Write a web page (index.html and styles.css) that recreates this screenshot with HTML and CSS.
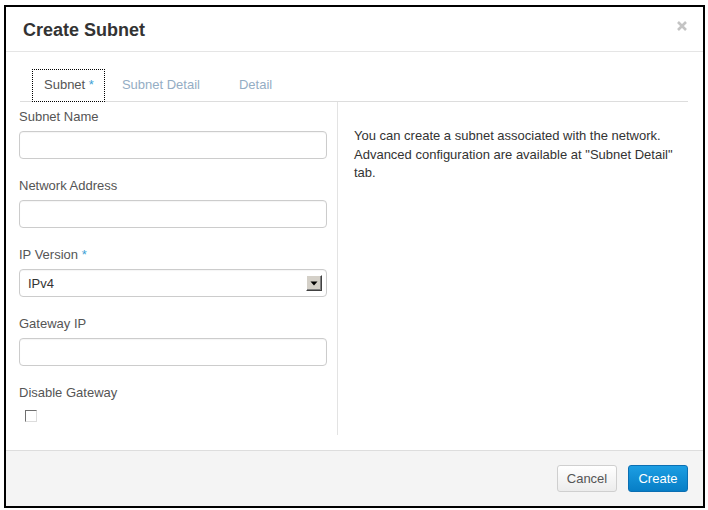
FILE: index.html
```html
<!DOCTYPE html>
<html>
<head>
<meta charset="utf-8">
<title>Create Subnet</title>
<link rel="stylesheet" href="styles.css">
</head>
<body>
<div class="modal">
  <div class="modal-header">
    <h3 class="title">Create Subnet</h3>
    <span class="close" aria-label="Close">
      <svg width="10" height="10" viewBox="0 0 10 10"><path d="M1 1 L9 9 M9 1 L1 9" stroke="#c4c4c4" stroke-width="2.6" stroke-linecap="butt"/></svg>
    </span>
  </div>
  <div class="modal-body">
    <ul class="tabs">
      <li class="tab tab-active">Subnet <span class="req">*</span></li>
      <li class="tab tab-second">Subnet Detail</li>
      <li class="tab tab-third">Detail</li>
    </ul>
    <div class="columns">
      <div class="col-left">
        <div class="field">
          <label class="label">Subnet Name</label>
          <div class="input"></div>
        </div>
        <div class="field">
          <label class="label">Network Address</label>
          <div class="input"></div>
        </div>
        <div class="field">
          <label class="label">IP Version <span class="req">*</span></label>
          <div class="input select">
            <span class="select-text">IPv4</span>
            <span class="select-btn">
              <svg width="8" height="5" viewBox="0 0 8 5"><path d="M0.5 0.5 H7.5 L4 4.5 Z" fill="#000"/></svg>
            </span>
          </div>
        </div>
        <div class="field">
          <label class="label">Gateway IP</label>
          <div class="input"></div>
        </div>
        <div class="field field-last">
          <label class="label">Disable Gateway</label>
          <span class="checkbox"></span>
        </div>
      </div>
      <div class="col-right">
        <p class="help">You can create a subnet associated with the network. Advanced configuration are available at "Subnet Detail" tab.</p>
      </div>
    </div>
  </div>
  <div class="modal-footer">
    <button class="btn btn-default">Cancel</button>
    <button class="btn btn-primary">Create</button>
  </div>
</div>
</body>
</html>
```

FILE: styles.css
```css
html, body {
  margin: 0;
  padding: 0;
  background: #fff;
}

body {
  font-family: "Liberation Sans", Arial, sans-serif;
  font-size: 13px;
  color: #333;
  padding: 5px 0 0 4px;
}

.modal {
  width: 701px;
  height: 503px;
  box-sizing: border-box;
  border: 2px solid #000;
  background: #fff;
  display: flex;
  flex-direction: column;
}

.modal-header {
  display: flex;
  align-items: center;
  justify-content: space-between;
  padding: 13px 16px 11px 17px;
  border-bottom: 1px solid #e5e5e5;
}

.title {
  margin: 0;
  font-size: 18px;
  line-height: 20px;
  font-weight: bold;
  color: #333;
}

.close {
  display: flex;
  width: 10px;
  height: 10px;
  margin-top: -8px;
}

.modal-body {
  flex: 1;
  padding: 17px 15px 0 13px;
}

.tabs {
  list-style: none;
  margin: 0 0 0 1px;
  padding: 0;
  display: flex;
  border-bottom: 1px solid #dddddd;
  height: 32px;
}

.tab {
  line-height: 32px;
  height: 32px;
  color: #94adc4;
  padding: 0 20px;
}

.tab-active {
  margin-left: 12px;
  padding: 0 11px 0 12px;
  color: #555;
  background: #fff;
  box-sizing: border-box;
  height: 33px;
  outline: 1px dotted #000;
  outline-offset: -1px;
}

.tab-second {
  padding-left: 17px;
}

.tab-third {
  padding-left: 19px;
}

.req {
  color: #3c9fd6;
}

.columns {
  display: flex;
}

.col-left {
  width: 308px;
  padding: 6px 10px 13px 0;
  border-right: 1px solid #e3e3e3;
}

.field {
  display: flex;
  flex-direction: column;
  margin-bottom: 18px;
}

.field-last {
  margin-bottom: 0;
}

.label {
  line-height: 18px;
  color: #555;
  margin-bottom: 5px;
}

.field-last .label {
  margin-bottom: 8px;
}

.input {
  height: 28px;
  box-sizing: border-box;
  border: 1px solid #cccccc;
  border-radius: 4px;
  background: #fff;
  box-shadow: inset 0 1px 1px rgba(0, 0, 0, 0.04);
}

.select {
  display: flex;
  align-items: center;
  justify-content: space-between;
  padding: 0 4px 0 8px;
}

.select-text {
  color: #333;
}

.select-btn {
  width: 16px;
  height: 16px;
  box-sizing: border-box;
  background: #d4d0c8;
  border-top: 1px solid #fff;
  border-left: 1px solid #fff;
  border-right: 1px solid #404040;
  border-bottom: 1px solid #404040;
  box-shadow: inset -1px -1px 0 #808080;
  display: flex;
  align-items: center;
  justify-content: center;
}

.checkbox {
  display: block;
  width: 12px;
  height: 12px;
  box-sizing: border-box;
  margin-left: 6px;
  border-top: 1px solid #6f6f6f;
  border-left: 1px solid #6f6f6f;
  border-right: 1px solid #dcdcdc;
  border-bottom: 1px solid #dcdcdc;
  background: #fff;
}

.col-right {
  flex: 1;
  padding: 25px 0 0 16px;
}

.help {
  margin: 0;
  max-width: 322px;
  line-height: 18.5px;
  color: #333;
}

.modal-footer {
  display: flex;
  justify-content: flex-end;
  gap: 11px;
  padding: 14px 15px 14px 0;
  border-top: 1px solid #dddddd;
  background: #f4f4f4;
}

.btn {
  font-family: "Liberation Sans", Arial, sans-serif;
  font-size: 13px;
  height: 27px;
  width: 60px;
  padding: 0;
  border-radius: 3px;
  cursor: pointer;
}

.btn-default {
  color: #555;
  border: 1px solid #cfcfcf;
  background: linear-gradient(#ffffff, #ececec);
}

.btn-primary {
  color: #fff;
  border: 1px solid #0b6fb3;
  background: linear-gradient(#1c9ee3, #077ec6);
}
```
